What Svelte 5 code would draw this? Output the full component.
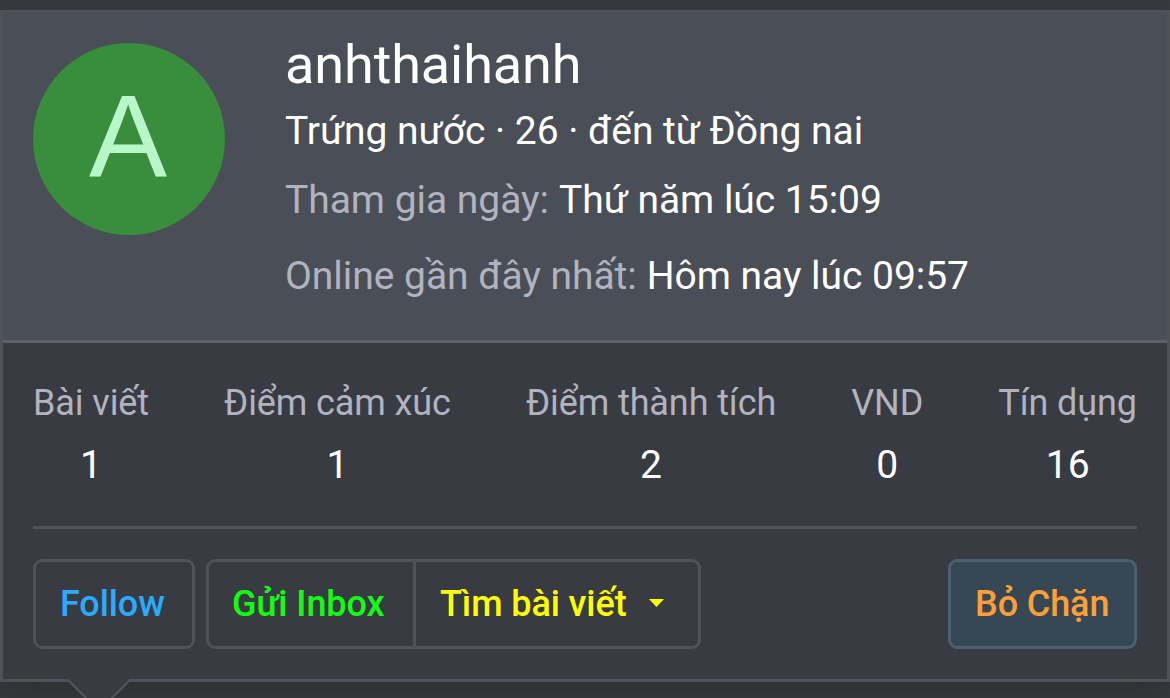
<script>
	let member = {
		name: 'anhthaihanh',
		initial: 'A',
		blurb: 'Trứng nước · 26 · đến từ Đồng nai'
	};

	let activity = [
		{ label: 'Tham gia ngày:', value: 'Thứ năm lúc 15:09' },
		{ label: 'Online gần đây nhất:', value: 'Hôm nay lúc 09:57' }
	];

	let stats = [
		{ label: 'Bài viết', value: 1 },
		{ label: 'Điểm cảm xúc', value: 1 },
		{ label: 'Điểm thành tích', value: 2 },
		{ label: 'VND', value: 0 },
		{ label: 'Tín dụng', value: 16 }
	];

	let following = $state(false);
</script>

<div class="page">
	<article class="tooltip">
		<header class="member-header">
			<span class="avatar">{member.initial}</span>
			<div class="member-info">
				<h4 class="member-name">{member.name}</h4>
				<div class="member-blurb">{member.blurb}</div>
				{#each activity as row (row.label)}
					<dl class="activity">
						<dt>{row.label}</dt>
						<dd>{row.value}</dd>
					</dl>
				{/each}
			</div>
		</header>

		<div class="member-body">
			<div class="stats">
				{#each stats as stat (stat.label)}
					<dl class="stat">
						<dt>{stat.label}</dt>
						<dd>{stat.value}</dd>
					</dl>
				{/each}
			</div>

			<hr class="separator" />

			<div class="actions">
				<button class="btn btn-follow" type="button" onclick={() => (following = !following)}>
					{following ? 'Unfollow' : 'Follow'}
				</button>
				<div class="btn-group">
					<button class="btn btn-inbox" type="button">Gửi Inbox</button>
					<button class="btn btn-search" type="button">
						Tìm bài viết
						<svg class="caret" width="15" height="8" viewBox="0 0 15 8" aria-hidden="true">
							<path d="M0 0h15L7.5 8z" fill="currentColor" />
						</svg>
					</button>
				</div>
				<button class="btn btn-block" type="button">Bỏ Chặn</button>
			</div>
		</div>

		<svg class="arrow" width="66" height="19" viewBox="0 0 66 19" aria-hidden="true">
			<path d="M1 0h64L33 32z" fill="#393b43" />
			<path d="M1 0l32 32L65 0" fill="none" stroke="#53555c" stroke-width="2" />
		</svg>
	</article>
</div>

<style>
	:global(body) {
		margin: 0;
		background: #393c44;
	}

	.page {
		box-sizing: border-box;
		height: 698px;
		padding-top: 10px;
		overflow: hidden;
		background: #373a3f;
		font-family: Roboto, 'Noto Sans', sans-serif;
		font-size: 39px;
		line-height: 1.4;
		letter-spacing: -0.03px;
		color: #fff;
	}

	.tooltip {
		position: relative;
		box-sizing: border-box;
		height: 672px;
		border: 3px solid #505259;
		background: #393b43;
		box-shadow: 0 15px 30px rgba(40, 44, 42, 0.55);
	}

	.member-header {
		display: flex;
		box-sizing: border-box;
		height: 330px;
		padding: 30px;
		border-bottom: 3px solid #5d6069;
		background: #4a4e56;
	}

	.avatar {
		box-sizing: border-box;
		flex: none;
		width: 192px;
		height: 192px;
		padding-right: 2px;
		border-radius: 50%;
		background: #388e3c;
		color: #b9f6ca;
		font-family: 'Liberation Sans', sans-serif;
		font-size: 117px;
		line-height: 188px;
		text-align: center;
	}

	.member-info {
		padding-left: 60px;
		white-space: nowrap;
	}

	.member-name {
		margin: -16px 0 0;
		font-size: 54px;
		font-weight: 400;
		letter-spacing: -0.1px;
	}

	.member-blurb {
		margin-top: 1px;
	}

	.activity {
		display: flex;
		gap: 10px;
		margin: 15px 0 0;
	}

	.activity + .activity {
		margin-top: 21px;
	}

	dt {
		color: #b1b4be;
	}

	dd {
		margin: 0;
	}

	.member-body {
		padding: 30px;
	}

	.stats {
		display: flex;
		justify-content: space-between;
	}

	.stat {
		margin: 0;
		padding-top: 5px;
		text-align: center;
		white-space: nowrap;
	}

	.stat dt {
		font-size: 36px;
		letter-spacing: -0.1px;
	}

	.stat dd {
		margin-top: 10px;
	}

	.separator {
		height: 3px;
		margin: 33px 0 30px;
		border: 0;
		background: #505258;
	}

	.actions {
		display: flex;
	}

	.btn {
		box-sizing: border-box;
		height: 90px;
		padding: 0 24px;
		border: 3px solid #505258;
		border-radius: 9px;
		background: #393b42;
		font: 500 36px/1.4 Roboto, 'Noto Sans', sans-serif;
		letter-spacing: -0.1px;
		text-align: left;
		white-space: nowrap;
		cursor: pointer;
	}

	.btn-follow {
		width: 162px;
		margin-right: 11px;
		color: #29abff;
	}

	.btn-group {
		display: flex;
	}

	.btn-inbox {
		width: 210px;
		padding-left: 23px;
		border-radius: 9px 0 0 9px;
		color: #12ff12;
	}

	.btn-search {
		display: flex;
		align-items: center;
		width: 288px;
		margin-left: -3px;
		border-radius: 0 9px 9px 0;
		color: #ff0;
	}

	.caret {
		margin: -1px 0 0 22px;
	}

	.btn-block {
		width: 189px;
		margin-left: auto;
		border-color: #4d5f6c;
		background: #374854;
		color: #ff9f38;
	}

	.arrow {
		position: absolute;
		top: 666px;
		left: 63px;
	}
</style>
